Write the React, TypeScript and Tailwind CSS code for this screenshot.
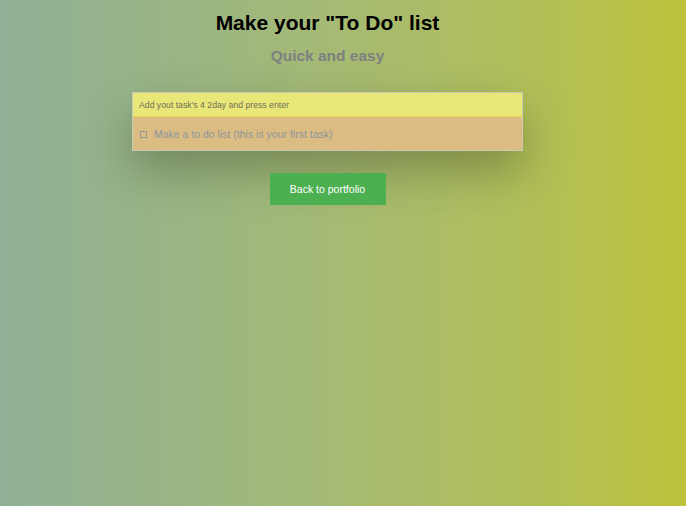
export default function App() {
  return (
    <div className="min-h-[506px] w-full bg-gradient-to-r from-[#8fb096] to-[#bcc33a] font-['Liberation_Sans',Arial,sans-serif]">
      <div className="flex w-[655px] flex-col items-center">
        <h1 className="mt-[11px] text-[21px] font-bold leading-[24px] text-black">Make your "To Do" list</h1>
        <h2 className="mt-[12px] text-[15.5px] font-bold leading-[18px] text-[#7d8080]">Quick and easy</h2>
        <div className="mt-[27px] w-[391px] border border-[#c9c9b8] shadow-[0_20px_45px_rgba(40,50,20,0.35)]">
          <div className="flex h-[24px] items-center border-b border-[#e6d94a] bg-[#e9e777] px-[6px] pt-[2px] text-[8.7px] text-[#6e6e5a]">
            Add yout task's 4 2day and press enter
          </div>
          <div className="flex h-[33px] items-center bg-[#dbbd84] pl-[7px] pt-[2px] text-[10.5px] text-[#8c959b]">
            <span className="mr-[7px] box-border h-[7px] w-[7px] border border-[#999a96]" />
            Make a to do list (this is your first task)
          </div>
        </div>
        <button className="mt-[22px] h-[32px] w-[116px] bg-[#4caf50] pt-[1px] text-[10.5px] text-white">Back to portfolio</button>
      </div>
    </div>
  );
}
